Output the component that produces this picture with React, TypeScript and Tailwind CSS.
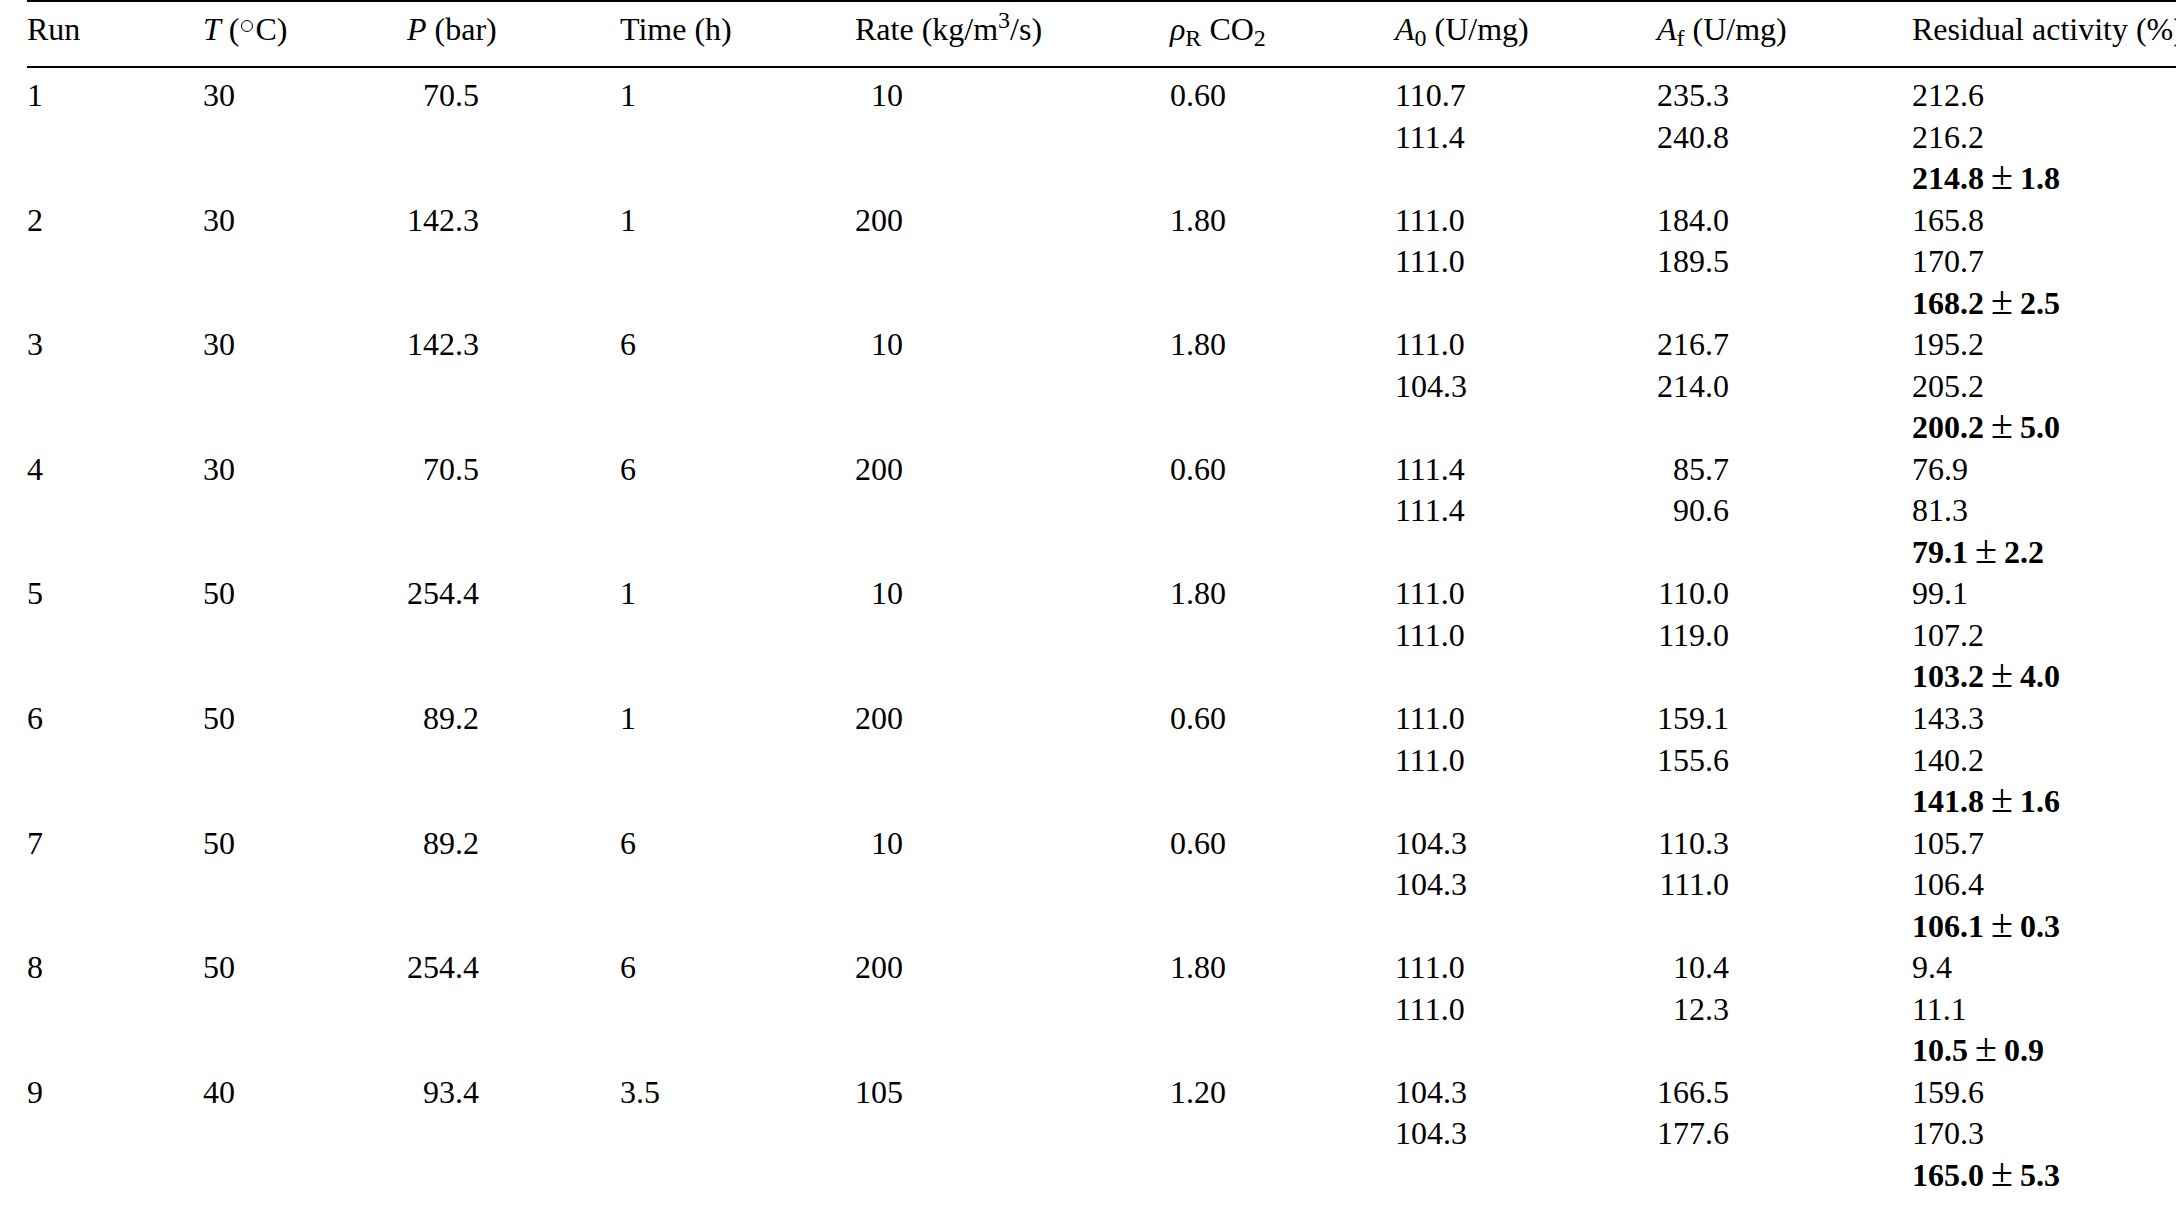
type Run = {
  run: string;
  t: string;
  p: string;
  time: string;
  rate: string;
  rho: string;
  a0: string[];
  af: string[];
  res: string[];
  mean: string;
  sd: string;
};

const runs: Run[] = [
  { run: "1", t: "30", p: "70.5", time: "1", rate: "10", rho: "0.60", a0: ["110.7", "111.4"], af: ["235.3", "240.8"], res: ["212.6", "216.2"], mean: "214.8", sd: "1.8" },
  { run: "2", t: "30", p: "142.3", time: "1", rate: "200", rho: "1.80", a0: ["111.0", "111.0"], af: ["184.0", "189.5"], res: ["165.8", "170.7"], mean: "168.2", sd: "2.5" },
  { run: "3", t: "30", p: "142.3", time: "6", rate: "10", rho: "1.80", a0: ["111.0", "104.3"], af: ["216.7", "214.0"], res: ["195.2", "205.2"], mean: "200.2", sd: "5.0" },
  { run: "4", t: "30", p: "70.5", time: "6", rate: "200", rho: "0.60", a0: ["111.4", "111.4"], af: ["85.7", "90.6"], res: ["76.9", "81.3"], mean: "79.1", sd: "2.2" },
  { run: "5", t: "50", p: "254.4", time: "1", rate: "10", rho: "1.80", a0: ["111.0", "111.0"], af: ["110.0", "119.0"], res: ["99.1", "107.2"], mean: "103.2", sd: "4.0" },
  { run: "6", t: "50", p: "89.2", time: "1", rate: "200", rho: "0.60", a0: ["111.0", "111.0"], af: ["159.1", "155.6"], res: ["143.3", "140.2"], mean: "141.8", sd: "1.6" },
  { run: "7", t: "50", p: "89.2", time: "6", rate: "10", rho: "0.60", a0: ["104.3", "104.3"], af: ["110.3", "111.0"], res: ["105.7", "106.4"], mean: "106.1", sd: "0.3" },
  { run: "8", t: "50", p: "254.4", time: "6", rate: "200", rho: "1.80", a0: ["111.0", "111.0"], af: ["10.4", "12.3"], res: ["9.4", "11.1"], mean: "10.5", sd: "0.9" },
  { run: "9", t: "40", p: "93.4", time: "3.5", rate: "105", rho: "1.20", a0: ["104.3", "104.3"], af: ["166.5", "177.6"], res: ["159.6", "170.3"], mean: "165.0", sd: "5.3" },
];

const grid =
  "grid grid-cols-[176px_204px_213px_235px_315px_225px_262px_255px_1fr] auto-rows-[41.54px] whitespace-nowrap";

const Header = () => (
  <div className={`${grid} pt-[6.5px] pb-[16px] border-b-2 border-black`}>
    <div>Run</div>
    <div>
      <i>T</i> (
      <span className="inline-block w-[12px] h-[12px] rounded-full border-[1.5px] border-black align-[8px] mx-[2px]" />
      C)
    </div>
    <div>
      <i>P</i> (bar)
    </div>
    <div>Time (h)</div>
    <div>
      Rate (kg/m<sup>3</sup>/s)
    </div>
    <div>
      <i>ρ</i>
      <sub>R</sub> CO<sub>2</sub>
    </div>
    <div>
      <i>A</i>
      <sub>0</sub> (U/mg)
    </div>
    <div>
      <i>A</i>
      <sub>f</sub> (U/mg)
    </div>
    <div>Residual activity (%)</div>
  </div>
);

const RunRows = ({ r }: { r: Run }) => (
  <>
    <div>{r.run}</div>
    <div>{r.t}</div>
    <div>
      <span className="inline-block w-[72px] text-right">{r.p}</span>
    </div>
    <div>{r.time}</div>
    <div>
      <span className="inline-block w-[48px] text-right">{r.rate}</span>
    </div>
    <div>{r.rho}</div>
    <div>{r.a0[0]}</div>
    <div>
      <span className="inline-block w-[72px] text-right">{r.af[0]}</span>
    </div>
    <div>{r.res[0]}</div>

    <div className="col-start-7">{r.a0[1]}</div>
    <div>
      <span className="inline-block w-[72px] text-right">{r.af[1]}</span>
    </div>
    <div>{r.res[1]}</div>

    <div className="col-start-9">
      <b>{r.mean}</b>
      <span className="px-[7px] text-[40px] leading-[0]">±</span>
      <b>{r.sd}</b>
    </div>
  </>
);

export default function App() {
  return (
    <div className="w-[2176px] h-[1209px] overflow-hidden bg-white text-black font-['Liberation_Serif','Times_New_Roman',serif] text-[32px] leading-[41.54px]">
      <div className="ml-[27px] border-t-2 border-black">
        <Header />
        <div className={`${grid} pt-[7px]`}>
          {runs.map((r) => (
            <RunRows key={r.run} r={r} />
          ))}
        </div>
      </div>
    </div>
  );
}
